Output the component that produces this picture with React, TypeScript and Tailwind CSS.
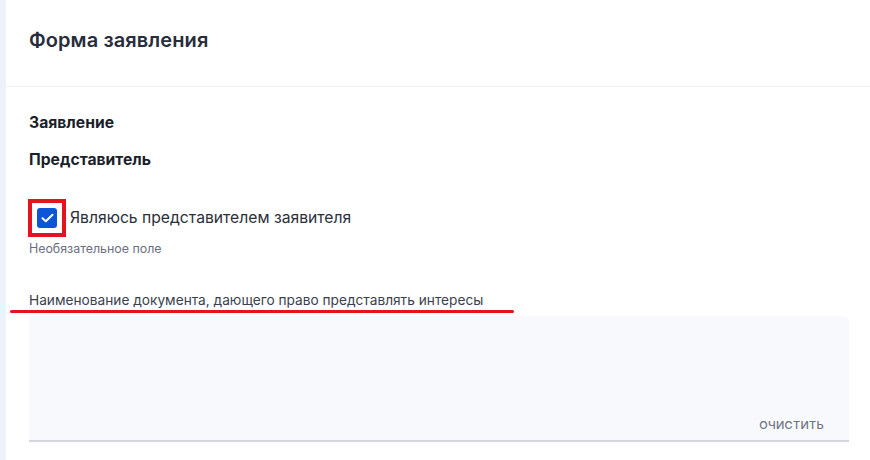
import React from "react";

export default function App() {
  return (
    <div className="flex w-[870px] h-[460px] bg-white overflow-hidden" style={{ fontFamily: "Inter, 'Noto Sans', sans-serif" }}>
      <div className="w-[6px] shrink-0 bg-[#edf1fa]" />
      <div className="flex-1 flex flex-col">
        <div className="h-[87px] border-b border-[#eef0f6] flex items-center pl-[23px] pb-[6px]">
          <h1 className="text-[20px] font-semibold text-[#272d3b] tracking-[0.1px]">Форма заявления</h1>
        </div>
        <div className="pl-[23px] pr-[21px] flex flex-col">
          <div className="mt-[26px] text-[15.7px] font-bold text-[#1b1f2a] leading-[20px]">Заявление</div>
          <div className="mt-[17px] text-[15.7px] font-bold text-[#1b1f2a] leading-[20px]">Представитель</div>
          <div className="mt-[29px] flex items-center">
            <div className="w-[38px] h-[38px] -ml-[1px] border-[4px] border-[#e3141f] flex items-center justify-center">
              <div className="w-[20px] h-[20px] rounded-[3px] bg-[#0b55d6] flex items-center justify-center">
                <svg width="13" height="10" viewBox="0 0 13 10" fill="none">
                  <path d="M1.5 5.2 L4.8 8.3 L11.5 1.7" stroke="white" strokeWidth="2" strokeLinecap="round" strokeLinejoin="round" />
                </svg>
              </div>
            </div>
            <span className="ml-[4px] text-[15.7px] text-[#2b2f3a]">Являюсь представителем заявителя</span>
          </div>
          <div className="mt-[4px] text-[12.4px] text-[#6a6f80] leading-[16px]">Необязательное поле</div>
          <div className="mt-[34px] relative">
            <div className="text-[13.7px] text-[#3a3f4c] leading-[18px]">Наименование документа, дающего право представлять интересы</div>
            <div className="absolute left-[-19px] top-[19px] w-[504px] h-[3px] rounded-full bg-[#e3141f]" />
          </div>
          <div className="mt-[7px] h-[126px] bg-[#f8f9fd] rounded-tr-[6px] border-b-[2px] border-[#d3d6e1] flex items-end justify-end pr-[25px] pb-[7px]">
            <span className="text-[11px] tracking-[0.3px] text-[#6d7180] font-medium">ОЧИСТИТЬ</span>
          </div>
        </div>
      </div>
    </div>
  );
}
